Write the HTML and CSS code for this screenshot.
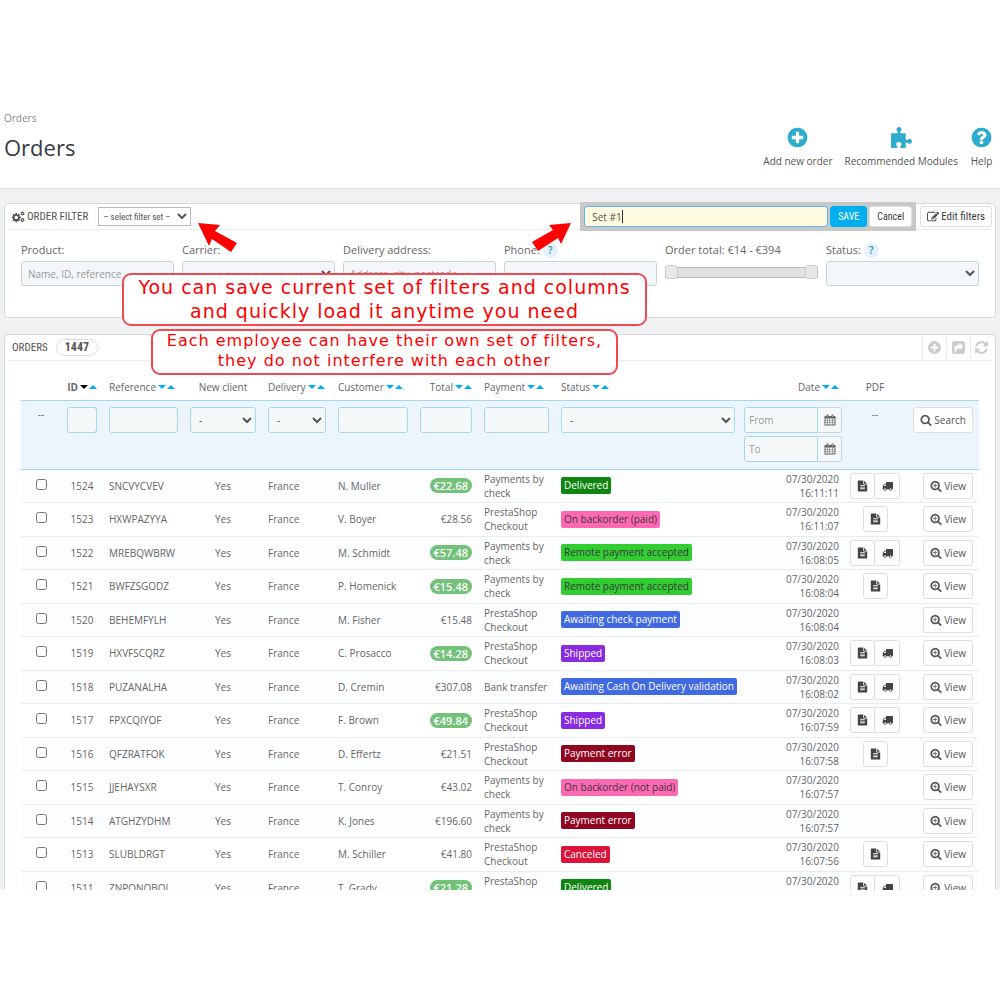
FILE: index.html
```html
<!DOCTYPE html>
<html lang="en">
<head>
    <meta charset="UTF-8">
    <meta name="viewport" content="width=device-width, initial-scale=1.0">
    <title>Orders</title>
    <link rel="stylesheet" href="styles.css">
</head>
<body>
    <svg class="sprite" aria-hidden="true">
        <symbol id="plus" viewBox="0 0 1792 1792"><path d="M1344 960v-128q0-26-19-45t-45-19h-256v-256q0-26-19-45t-45-19h-128q-26 0-45 19t-19 45v256h-256q-26 0-45 19t-19 45v128q0 26 19 45t45 19h256v256q0 26 19 45t45 19h128q26 0 45-19t19-45v-256h256q26 0 45-19t19-45zm320-64q0 209-103 385.5t-279.5 279.5-385.5 103-385.5-103-279.5-279.5-103-385.5 103-385.5 279.5-279.5 385.5-103 385.5 103 279.5 279.5 103 385.5z"/></symbol>
        <symbol id="question" viewBox="0 0 1792 1792"><path d="M1024 1376v-192q0-14-9-23t-23-9h-192q-14 0-23 9t-9 23v192q0 14 9 23t23 9h192q14 0 23-9t9-23zm256-672q0-88-55.5-163t-138.5-116-170-41q-243 0-371 213-15 24 8 42l132 100q7 6 19 6 16 0 25-12 53-68 86-92 34-24 86-24 48 0 85.5 26t37.5 59q0 38-20 61t-68 45q-63 28-115.5 86.5t-52.5 125.5v36q0 14 9 23t23 9h192q14 0 23-9t9-23q0-19 21.5-49.5t54.5-49.5q32-18 49-28.5t46-35 44.5-48 28-60.5 12.5-81zm384 192q0 209-103 385.5t-279.5 279.5-385.5 103-385.5-103-279.5-279.5-103-385.5 103-385.5 279.5-279.5 385.5-103 385.5 103 279.5 279.5 103 385.5z"/></symbol>
        <symbol id="puzzle" viewBox="0 0 22 22"><path d="M1 7h5.600q1.100 0 .9-1-.2-.6-.8-1.300-.5-.7-.5-1.500Q6.200 1 8.600 1T11 3.200q0 .8-.5 1.500-.6.700-.7 1.300-.1 1 1 1H15v5.400q0 1.200 1 1.100.6-.1 1.200-.7.700-.6 1.500-.6 2.300 0 2.300 2.400T18.700 17q-.8 0-1.500-.6-.6-.5-1.200-.6-1-.1-1 1V21h-4.400q-1 0-.9-1 .1-.6.7-1.200.5-.6.5-1.400 0-2.200-2.500-2.200t-2.500 2.200q0 .8.5 1.400.7.600.8 1.200.1 1-1 1H1z"/></symbol>
        <symbol id="cogs" viewBox="0 0 26 22"><path fill-rule="evenodd" d="M7 3h3l.5 2.400 1.500.6 2-1.300 2 2-1.300 2.100.6 1.400 2.500.5v3l-2.500.5-.6 1.400L16 17.700l-2 2-2-1.300-1.500.6L10 21.400H7L6.500 19 5 18.400l-2 1.300-2-2 1.300-2.100-.6-1.400L0 13.700v-3l1.700-.5.6-1.400L1 6.700l2-2L5 6l1.500-.6zM8.500 8.700a3.500 3.500 0 1 0 0 7 3.500 3.500 0 0 0 0-7zM20 0h2l.4 1.500 1.500-.4 1 1.700L24 4l1 1.200-1 1.700-1.600-.4L22 8h-2l-.4-1.500-1.500.4-1-1.700L18 4l-.9-1.200 1-1.700 1.500.4zM21 2.600a1.400 1.400 0 1 0 0 2.800 1.400 1.400 0 0 0 0-2.800zM20 13h2l.4 1.500 1.500-.4 1 1.700-.9 1.200 1 1.200-1 1.700-1.600-.4L22 21h-2l-.4-1.500-1.500.4-1-1.700.9-1.200-.9-1.200 1-1.700 1.500.4zM21 15.600a1.400 1.400 0 1 0 0 2.800 1.400 1.400 0 0 0 0-2.800z"/></symbol>
        <symbol id="search" viewBox="0 0 1792 1792"><path d="M1216 832q0-185-131.5-316.5t-316.5-131.5-316.5 131.5-131.5 316.5 131.5 316.5 316.5 131.5 316.5-131.5 131.5-316.5zm512 832q0 52-38 90t-90 38q-54 0-90-38l-343-342q-179 124-399 124-143 0-273.5-55.5t-225-150-150-225-55.5-273.5 55.5-273.5 150-225 225-150 273.5-55.5 273.5 55.5 225 150 150 225 55.5 273.5q0 220-124 399l343 343q37 37 37 90z"/></symbol>
        <symbol id="zoom" viewBox="0 0 1792 1792"><path d="M1088 800v64q0 13-9.500 22.500t-22.500 9.500h-224v224q0 13-9.500 22.500t-22.500 9.500h-64q-13 0-22.500-9.500t-9.500-22.500v-224h-224q-13 0-22.500-9.500t-9.500-22.500v-64q0-13 9.500-22.500t22.500-9.500h224v-224q0-13 9.500-22.500t22.500-9.500h64q13 0 22.500 9.500t9.500 22.500v224h224q13 0 22.500 9.500t9.500 22.500zm128 32q0-185-131.500-316.500t-316.500-131.500-316.500 131.500-131.500 316.500 131.500 316.500 316.500 131.500 316.500-131.500 131.500-316.500zm512 832q0 52-38 90t-90 38q-54 0-90-38l-343-342q-179 124-399 124-143 0-273.500-55.500t-225-150-150-225-55.500-273.500 55.500-273.500 150-225 225-150 273.500-55.500 273.500 55.500 225 150 150 225 55.500 273.500q0 220-124 399l343 343q37 37 37 90z"/></symbol>
        <symbol id="refresh" viewBox="0 0 1792 1792"><path d="M1639 1056q0 5-1 7-64 268-268 434.500t-478 166.500q-146 0-282.500-55t-243.500-157l-129 129q-19 19-45 19t-45-19-19-45v-448q0-26 19-45t45-19h448q26 0 45 19t19 45-19 45l-137 137q71 66 161 102t187 36q134 0 250-65t186-179q11-17 53-117 8-23 30-23h192q13 0 22.500 9.500t9.500 22.500zm25-800v448q0 26-19 45t-45 19h-448q-26 0-45-19t-19-45 19-45l138-138q-148-137-349-137-134 0-250 65t-186 179q-11 17-53 117-8 23-30 23h-199q-13 0-22.500-9.500t-9.500-22.500v-7q65-268 270-434.500t480-166.500q146 0 284 55.500t245 156.500l130-129q19-19 45-19t45 19 19 45z"/></symbol>
        <symbol id="share" viewBox="0 0 16 16"><path fill-rule="evenodd" d="M4 1h8a3 3 0 0 1 3 3v8a3 3 0 0 1-3 3H4a3 3 0 0 1-3-3V4a3 3 0 0 1 3-3zM9 3v2C5.500 5 3.500 7 3.500 9.500q0 2 1.500 3.500.5.300.5-.3C5.200 10 6.200 8.800 9 8.800v2l4.200-3.900z"/></symbol>
        <symbol id="edit" viewBox="0 0 1792 1792"><path d="M888 1184l116-116-152-152-116 116v56h96v96h56zm440-720q-16-16-33 1l-350 350q-17 17-1 33t33-1l350-350q17-17 1-33zm80 594v190q0 119-84.500 203.500t-203.500 84.500h-832q-119 0-203.500-84.500t-84.500-203.500v-832q0-119 84.500-203.500t203.500-84.500h832q63 0 117 25 15 7 18 23 3 17-9 29l-49 49q-14 14-32 8-23-6-45-6h-832q-66 0-113 47t-47 113v832q0 66 47 113t113 47h832q66 0 113-47t47-113v-126q0-13 9-22l64-64q15-15 35-7t20 29zm-96-738l288 288-672 672h-288v-288zm444 132l-92 92-288-288 92-92q28-28 68-28t68 28l152 152q28 28 28 68t-28 68z"/></symbol>
        <symbol id="file" viewBox="0 0 1792 1792"><path d="M1596 476q14 14 28 36h-472v-472q22 14 36 28zm-476 164h544v1056q0 40-28 68t-68 28h-1344q-40 0-68-28t-28-68v-1600q0-40 28-68t68-28h800v544q0 40 28 68t68 28zm160 736v-64q0-14-9-23t-23-9h-704q-14 0-23 9t-9 23v64q0 14 9 23t23 9h704q14 0 23-9t9-23zm0-256v-64q0-14-9-23t-23-9h-704q-14 0-23 9t-9 23v64q0 14 9 23t23 9h704q14 0 23-9t9-23zm0-256v-64q0-14-9-23t-23-9h-704q-14 0-23 9t-9 23v64q0 14 9 23t23 9h704q14 0 23-9t9-23z"/></symbol>
        <symbol id="truck" viewBox="0 0 1792 1792"><path d="M640 1408q0-52-38-90t-90-38-90 38-38 90 38 90 90 38 90-38 38-90zm-384-512h384v-256h-158q-13 0-22 9l-195 195q-9 9-9 22v30zm1280 512q0-52-38-90t-90-38-90 38-38 90 38 90 90 38 90-38 38-90zm256-1088v1024q0 15-4 26.500t-13.500 18.500-16.500 11.500-23.500 6-22.500 2-25.500 0-22.500-.5q0 106-75 181t-181 75-181-75-75-181h-384q0 106-75 181t-181 75-181-75-75-181h-64q-3 0-22.500.5t-25.500 0-22.500-2-23.500-6-16.500-11.500-13.500-18.500-4-26.500q0-26 19-45t45-19v-320q0-8-.5-35t0-38 2.500-34.500 6.500-37 14-30.500 22.500-30l198-198q19-19 50.500-32t58.500-13h160v-192q0-26 19-45t45-19h1024q26 0 45 19t19 45z"/></symbol>
        <symbol id="calendar" viewBox="0 0 24 24"><path fill-rule="evenodd" d="M2 4h3V2q0-1 1-1h2q1 0 1 1v2h6V2q0-1 1-1h2q1 0 1 1v2h3q1 0 1 1v17q0 1-1 1H2q-1 0-1-1V5q0-1 1-1zM3 9v3h3V9zm4 0v3h4V9zm5 0v3h4V9zm5 0v3h4V9zM3 13v4h3v-4zm4 0v4h4v-4zm5 0v4h4v-4zm5 0v4h4v-4zM3 18v3h3v-3zm4 0v3h4v-3zm5 0v3h4v-3zm5 0v3h4v-3zM6.500 3v3h1V3zm10 0v3h1V3z"/></symbol>
    </svg>

    <div class="frame">
        <header class="page-head">
            <div>
                <a class="breadcrumb" href="#">Orders</a>
                <h1>Orders</h1>
            </div>
            <nav class="toolbar">
                <a href="#"><svg class="icon"><use href="#plus"/></svg>Add new order</a>
                <a href="#"><svg class="icon"><use href="#puzzle"/></svg>Recommended Modules</a>
                <a href="#"><svg class="icon"><use href="#question"/></svg>Help</a>
            </nav>
        </header>

        <main class="content">
            <section class="panel filter-panel">
                <div class="panel-heading">
                    <h2><svg class="icon cogs"><use href="#cogs"/></svg>ORDER FILTER</h2>
                    <select class="filter-set" aria-label="Filter set">
                        <option>– select filter set –</option>
                    </select>
                    <form class="save-set">
                        <div class="set-name">
                            <input type="text" value="Set #1" aria-label="Set name">
                            <span class="caret"></span>
                        </div>
                        <button type="button" class="save">SAVE</button>
                        <button type="button">Cancel</button>
                    </form>
                    <button type="button" class="edit"><svg class="icon"><use href="#edit"/></svg>Edit filters</button>
                </div>
                <div class="filters">
                    <div>
                        <label for="f-product">Product:</label>
                        <input type="text" id="f-product" placeholder="Name, ID, reference">
                    </div>
                    <div>
                        <label for="f-carrier">Carrier:</label>
                        <select id="f-carrier"><option></option></select>
                    </div>
                    <div>
                        <label for="f-address">Delivery address:</label>
                        <input type="text" id="f-address" placeholder="Address, city, postcode">
                    </div>
                    <div>
                        <label for="f-phone">Phone: <span class="hint">?</span></label>
                        <input type="text" id="f-phone">
                    </div>
                    <div>
                        <label for="f-min">Order total: €14 - €394</label>
                        <div class="range">
                            <input type="range" id="f-min" min="14" max="394" value="14">
                            <input type="range" min="14" max="394" value="394" aria-label="Maximum total">
                        </div>
                    </div>
                    <div>
                        <label for="f-status">Status: <span class="hint">?</span></label>
                        <select id="f-status"><option></option></select>
                    </div>
                </div>

                <svg class="arrow arrow-left" viewBox="0 0 40 30"><path d="M0 1l22 2-5 6 22 12-6 9-19-13-3 7z"/></svg>
                <svg class="arrow arrow-right" viewBox="0 0 40 30"><path d="M39 1l-22 2 4 5L0 20l6 9 20-13 3 6z"/></svg>
                <div class="callout callout-big">You can save current set of filters and columns<br>and quickly load it anytime you need</div>
                <div class="callout callout-small">Each employee can have their own set of filters,<br>they do not interfere with each other</div>
            </section>

            <section class="panel">
                <div class="panel-heading">
                    <h2>ORDERS <span class="count">1447</span></h2>
                    <div class="actions">
                        <button type="button" aria-label="Add"><svg class="icon"><use href="#plus"/></svg></button>
                        <button type="button" aria-label="Export"><svg class="icon"><use href="#share"/></svg></button>
                        <button type="button" aria-label="Refresh"><svg class="icon"><use href="#refresh"/></svg></button>
                    </div>
                </div>
                <div class="table-wrap">
                    <table>
                        <colgroup>
                            <col class="c-check"><col class="c-id"><col class="c-ref"><col class="c-new"><col class="c-delivery"><col class="c-customer"><col class="c-total"><col class="c-payment"><col><col class="c-date"><col class="c-pdf"><col class="c-view">
                        </colgroup>
                        <thead>
                            <tr class="titles">
                                <th></th>
                                <th class="center"><b>ID</b><i class="down on"></i><i class="up"></i></th>
                                <th>Reference<i class="down"></i><i class="up"></i></th>
                                <th class="center">New client</th>
                                <th>Delivery<i class="down"></i><i class="up"></i></th>
                                <th>Customer<i class="down"></i><i class="up"></i></th>
                                <th class="right">Total<i class="down"></i><i class="up"></i></th>
                                <th>Payment<i class="down"></i><i class="up"></i></th>
                                <th>Status<i class="down"></i><i class="up"></i></th>
                                <th class="right">Date<i class="down"></i><i class="up"></i></th>
                                <th class="center">PDF</th>
                                <th></th>
                            </tr>
                            <tr class="search-row">
                                <td class="center">--</td>
                                <td><input type="text" aria-label="ID"></td>
                                <td><input type="text" aria-label="Reference"></td>
                                <td><select aria-label="New client"><option>-</option></select></td>
                                <td><select aria-label="Delivery"><option>-</option></select></td>
                                <td><input type="text" aria-label="Customer"></td>
                                <td><input type="text" aria-label="Total"></td>
                                <td><input type="text" aria-label="Payment"></td>
                                <td><select aria-label="Status"><option>-</option></select></td>
                                <td class="dates">
                                    <div class="date"><input type="text" placeholder="From" aria-label="From"><span><svg class="icon"><use href="#calendar"/></svg></span></div>
                                    <div class="date"><input type="text" placeholder="To" aria-label="To"><span><svg class="icon"><use href="#calendar"/></svg></span></div>
                                </td>
                                <td class="center">--</td>
                                <td class="right"><button type="button" class="search"><svg class="icon"><use href="#search"/></svg>Search</button></td>
                            </tr>
                        </thead>
                        <tbody id="orders"></tbody>
                    </table>
                </div>
            </section>
        </main>
    </div>
    <script src="script.js"></script>
</body>
</html>
```
FILE: styles.css
```css
* {
    box-sizing: border-box;
}
body {
    margin: 0;
    padding: 110px 0;
    background: #fff;
    color: #666;
    font: 10px/14px "Open Sans", sans-serif;
}
input, select, button {
    font: inherit;
    color: #555;
    margin: 0;
}
.sprite {
    display: none;
}
.icon {
    width: 12px;
    height: 12px;
    fill: currentColor;
    flex: none;
}
.frame {
    height: calc(100vh - 220px);
    overflow: hidden;
    background: #eff1f2;
}

/* header */
.page-head {
    display: flex;
    justify-content: space-between;
    height: 79px;
    padding: 1px 7px 0 4px;
    background: #fff;
    border-bottom: 1px solid #dcdee0;
}
.breadcrumb {
    color: #888;
    text-decoration: none;
}
h1 {
    margin: 7px 0 0;
    font-size: 22px;
    font-weight: 400;
    line-height: 30px;
    color: #363a41;
}
.toolbar {
    display: flex;
    gap: 12px;
    padding-top: 15px;
}
.toolbar a {
    display: flex;
    flex-direction: column;
    align-items: center;
    gap: 5px;
    color: #555;
    text-decoration: none;
}
.toolbar .icon {
    width: 23px;
    height: 23px;
    fill: #2eacce;
}

/* panels */
.content {
    padding: 14px 4px;
}
.panel {
    position: relative;
    margin-bottom: 16px;
    padding: 0 3px;
    background: #fff;
    border: 1px solid #d3d8db;
    border-radius: 4px;
}
.filter-panel {
    height: 115px;
}
.panel-heading {
    display: flex;
    align-items: center;
    height: 26px;
    padding-left: 4px;
    border-bottom: 1px solid #eaedef;
    font-family: "Ubuntu Condensed", "Roboto Condensed", Roboto, sans-serif;
    font-size: 11px;
}
h2 {
    display: flex;
    align-items: center;
    margin: 0;
    font-size: 11px;
    font-weight: 400;
    color: #555;
}
.cogs {
    width: 13px;
    margin-right: 2px;
}
.filter-set {
    width: 93px;
    height: 19px;
    margin-left: 10px;
    padding: 0;
    background: #fff;
    border: 1px solid #bbb;
    font-size: 9px;
}
.save-set {
    display: flex;
    gap: 2px;
    width: 328px;
    margin-left: auto;
    background: #c8c8c8;
    box-shadow: 0 0 0 4px #c8c8c8;
}
.panel-heading button {
    height: 21px;
    padding: 0 7px;
    background: #fff;
    border: 1px solid #dedede;
    border-radius: 3px;
    color: #363a41;
    font-size: 10px;
}
.panel-heading .save {
    background: #00aff0;
    border-color: #00aff0;
    color: #fff;
}
.panel-heading .edit {
    display: flex;
    align-items: center;
    gap: 2px;
    margin-left: 8px;
    padding: 0 6px;
    font-size: 11px;
}
.set-name {
    position: relative;
    flex: 1;
}
.set-name input {
    width: 100%;
    height: 21px;
    padding: 0 7px;
    background: #fffbe1;
    border: 1px solid #66afe9;
    border-radius: 3px;
    font-family: "Open Sans", sans-serif;
    font-size: 10px;
}
.caret {
    position: absolute;
    top: 4px;
    left: 38px;
    width: 1px;
    height: 13px;
    background: #333;
}
.filters {
    display: grid;
    grid-template-columns: repeat(6, 1fr);
    gap: 8px;
    padding: 12px 13px;
    font-size: 11px;
}
.filters label {
    display: block;
    height: 16px;
    margin-bottom: 3px;
    line-height: 16px;
}
.filters input[type=text], .filters select {
    width: 100%;
    height: 25px;
    padding: 0 6px;
    background: #f3f7f9;
    border: 1px solid #c7d6db;
    border-radius: 3px;
    font-size: 10px;
}
::placeholder {
    color: #999;
}
.hint {
    display: inline-block;
    width: 15px;
    border-radius: 8px;
    background: #e4f2f9;
    color: #3586ae;
    font-weight: 600;
    font-size: 10px;
    line-height: 15px;
    text-align: center;
}
.range {
    display: grid;
    align-items: center;
    height: 22px;
}
.range::before {
    content: "";
    grid-area: 1 / 1;
    height: 9px;
    background: #e1e1e1;
    border: 1px solid #bbb;
    border-width: 1px 0;
}
.range input {
    grid-area: 1 / 1;
    width: 100%;
    height: 14px;
    appearance: none;
    background: none;
    pointer-events: none;
}
.range input::-webkit-slider-thumb {
    appearance: none;
    width: 13px;
    height: 14px;
    background: #e8e8e8;
    border: 1px solid #ccc;
    border-radius: 3px;
    pointer-events: auto;
}

/* annotations */
.arrow {
    position: absolute;
    width: 40px;
    height: 30px;
    fill: #f00;
}
.arrow-left {
    top: 18px;
    left: 193px;
}
.arrow-right {
    top: 18px;
    left: 527px;
}
.callout {
    position: absolute;
    z-index: 1;
    border: 2px solid #ef4a52;
    border-radius: 9px;
    background: rgba(255, 255, 255, .88);
    color: #f00;
    font-family: "DejaVu Sans", sans-serif;
    letter-spacing: 1px;
    text-align: center;
    white-space: nowrap;
}
.callout-big {
    top: 69px;
    left: 117px;
    width: 525px;
    height: 53px;
    font-size: 19px;
    line-height: 24px;
}
.callout-small {
    top: 125px;
    left: 146px;
    width: 467px;
    height: 46px;
    font-size: 16px;
    line-height: 20px;
}

/* orders table */
.count {
    margin-left: 8px;
    padding: 0 8px;
    border: 1px solid #ddd;
    border-radius: 9px;
    font-size: 12px;
    font-weight: 700;
    line-height: 15px;
}
.actions {
    display: flex;
    align-self: stretch;
    margin-left: auto;
}
.actions button {
    width: 24px;
    height: 25px;
    padding: 3px 0 0;
    border-width: 0 0 0 1px;
    border-color: #eaedef;
    border-radius: 0;
    color: #ccc;
}
.actions button:last-child {
    width: 22px;
}
.actions .icon {
    width: 15px;
    height: 15px;
}
.table-wrap {
    padding: 13px 13px 0;
}
table {
    width: 100%;
    table-layout: fixed;
    border-collapse: collapse;
}
.c-check { width: 40px; }
.c-id { width: 42px; }
.c-ref { width: 81px; }
.c-new { width: 78px; }
.c-delivery { width: 70px; }
.c-customer { width: 82px; }
.c-total { width: 64px; }
.c-payment { width: 77px; }
.c-date { width: 107px; }
.c-pdf { width: 54px; }
.c-view { width: 77px; }
th, td {
    padding: 0 6px;
    font-weight: 400;
    text-align: left;
    white-space: nowrap;
}
.center {
    text-align: center;
}
.right {
    text-align: right;
}
th i {
    display: inline-block;
    margin-left: 2px;
    border: 4px solid transparent;
    vertical-align: 2px;
}
th .down {
    border-top-color: #00aff0;
    border-bottom-width: 0;
}
th .up {
    margin-left: 1px;
    border-bottom-color: #00aff0;
    border-top-width: 0;
}
th .on {
    border-top-color: #000;
}
.titles th {
    height: 26px;
    padding-right: 0;
}
.titles th.right {
    padding-right: 9px;
}
.titles .right:nth-child(7) {
    padding-right: 6px;
}
.titles th.center {
    padding: 0;
}
.search-row td {
    height: 69px;
    padding: 6px 6px 0;
    vertical-align: top;
    background: #ebf5fb;
    border: 1px solid #a6d7ee;
    border-width: 1px 0;
}
.search-row input, .search-row select {
    width: 100%;
    height: 26px;
    padding: 0 4px;
    background: #f5f8f9;
    border: 1px solid #a6d7ee;
    border-radius: 3px;
}
.search-row .dates {
    padding: 6px 6px 0 3px;
}
.date {
    display: flex;
    margin-bottom: 3px;
}
.date input {
    min-width: 0;
    flex: 1;
    border-radius: 3px 0 0 3px;
}
.date span {
    display: flex;
    align-items: center;
    justify-content: center;
    width: 24px;
    border: 1px solid #c7d6db;
    border-left: 0;
    border-radius: 0 3px 3px 0;
    background: #f5f8f9;
}
td button {
    height: 26px;
    padding: 0 6px;
    background: #fff;
    border: 1px solid #dedede;
    border-radius: 3px;
    white-space: nowrap;
}
td button .icon {
    margin-right: 2px;
    vertical-align: -2px;
}
tbody tr {
    height: 33px;
    border-bottom: 1px solid #eaedef;
}
tbody tr:nth-child(even) {
    height: 34px;
}
tbody tr:nth-child(odd) {
    background: #fcfdfe;
}
tbody .wrap {
    white-space: normal;
}
tbody td.date-cell {
    padding-right: 9px;
}
tbody td input {
    display: block;
    width: 11px;
    height: 11px;
    margin: 0 auto 3px;
}
.paid {
    display: inline-block;
    padding: 0 4px;
    border-radius: 8px;
    background: #72c279;
    color: #fff;
    font-size: 11px;
    font-weight: 600;
    line-height: 15px;
}
.status {
    display: inline-block;
    padding: 0 3px;
    border-radius: 2px;
    color: #fff;
    line-height: 17px;
}
.delivered { background: #108510; }
.backorder { background: #ff69b4; color: #383838; }
.accepted { background: #32cd32; color: #383838; }
.awaiting { background: #4169e1; }
.shipped { background: #8a2be2; }
.error { background: #8f0621; }
.canceled { background: #dc143c; }
td.pdf {
    padding: 0;
}
.pdf div {
    display: flex;
    justify-content: center;
}
.pdf button {
    width: 25px;
    padding: 0;
}
.pdf button .icon {
    width: 11px;
    margin: 0;
    color: #444;
}
.pdf button + button {
    width: 26px;
    margin-left: -1px;
}
```
FILE: script.js
```js
const orders = [
    // id, reference, customer, total, paid, payment, status, class, time, documents
    [1524, 'SNCVYCVEV', 'N. Muller', '22.68', 1, 'Payments by check', 'Delivered', 'delivered', '16:11:11', 2],
    [1523, 'HXWPAZYYA', 'V. Boyer', '28.56', 0, 'PrestaShop Checkout', 'On backorder (paid)', 'backorder', '16:11:07', 1],
    [1522, 'MREBQWBRW', 'M. Schmidt', '57.48', 1, 'Payments by check', 'Remote payment accepted', 'accepted', '16:08:05', 2],
    [1521, 'BWFZSGODZ', 'P. Homenick', '15.48', 1, 'Payments by check', 'Remote payment accepted', 'accepted', '16:08:04', 1],
    [1520, 'BEHEMFYLH', 'M. Fisher', '15.48', 0, 'PrestaShop Checkout', 'Awaiting check payment', 'awaiting', '16:08:04', 0],
    [1519, 'HXVFSCQRZ', 'C. Prosacco', '14.28', 1, 'PrestaShop Checkout', 'Shipped', 'shipped', '16:08:03', 2],
    [1518, 'PUZANALHA', 'D. Cremin', '307.08', 0, 'Bank transfer', 'Awaiting Cash On Delivery validation', 'awaiting', '16:08:02', 2],
    [1517, 'FPXCQIYOF', 'F. Brown', '49.84', 1, 'PrestaShop Checkout', 'Shipped', 'shipped', '16:07:59', 2],
    [1516, 'QFZRATFOK', 'D. Effertz', '21.51', 0, 'PrestaShop Checkout', 'Payment error', 'error', '16:07:58', 1],
    [1515, 'JJEHAYSXR', 'T. Conroy', '43.02', 0, 'Payments by check', 'On backorder (not paid)', 'backorder', '16:07:57', 0],
    [1514, 'ATGHZYDHM', 'K. Jones', '196.60', 0, 'Payments by check', 'Payment error', 'error', '16:07:57', 0],
    [1513, 'SLUBLDRGT', 'M. Schiller', '41.80', 0, 'PrestaShop Checkout', 'Canceled', 'canceled', '16:07:56', 1],
    [1511, 'ZNPONOBOL', 'T. Grady', '21.28', 1, 'PrestaShop Checkout', 'Delivered', 'delivered', '16:07:55', 2]
];

const icon = name => `<svg class="icon"><use href="#${name}"/></svg>`;
const invoice = `<button type="button" aria-label="Invoice">${icon('file')}</button>`;
const slip = `<button type="button" aria-label="Delivery slip">${icon('truck')}</button>`;

document.getElementById('orders').innerHTML = orders.map(([id, ref, customer, total, paid, payment, status, cls, time, docs]) => `
    <tr>
        <td><input type="checkbox" aria-label="Order ${id}"></td>
        <td class="center">${id}</td>
        <td>${ref}</td>
        <td class="center">Yes</td>
        <td>France</td>
        <td>${customer}</td>
        <td class="right"><span class="${paid ? 'paid' : ''}">€${total}</span></td>
        <td class="wrap">${payment}</td>
        <td><span class="status ${cls}">${status}</span></td>
        <td class="right date-cell">07/30/2020<br>${time}</td>
        <td class="pdf"><div>${docs > 0 ? invoice : ''}${docs > 1 ? slip : ''}</div></td>
        <td class="right"><button type="button">${icon('zoom')}View</button></td>
    </tr>`).join('');
```
